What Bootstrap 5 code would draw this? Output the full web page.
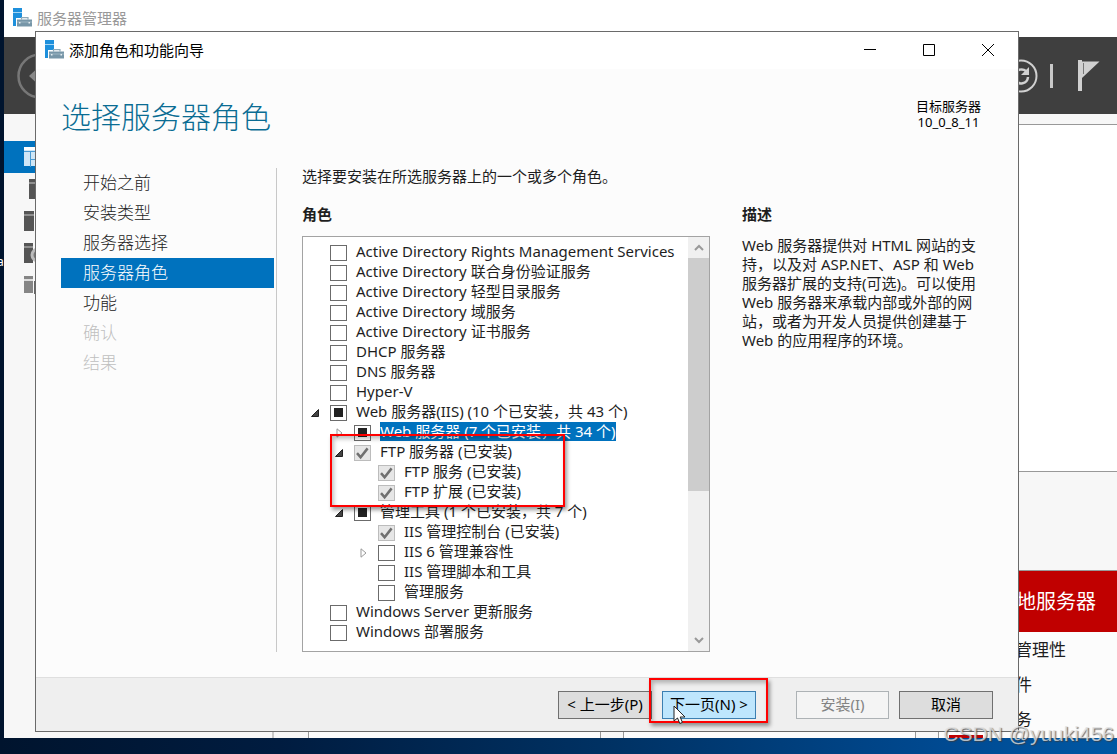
<!DOCTYPE html>
<html lang="zh-CN">
<head>
<meta charset="utf-8">
<meta name="viewport" content="width=device-width, initial-scale=1">
<title>添加角色和功能向导</title>
<link rel="stylesheet" href="https://cdn.jsdelivr.net/npm/bootstrap@5.3.0/dist/css/bootstrap.min.css">
<style>
  body { font-family: "Noto Sans", "Noto Sans CJK SC", sans-serif; font-size: 15px; line-height: 20px; color: #1e1e1e; }
  .desktop { height: 100vh; background: linear-gradient(90deg, #00142e, #001c40 25%, #003264 55%, #004a92 85%, #0058a4); }
  .desk-label { left: -3px; top: 252px; color: #fff; font-size: 12px; }

  /* Server manager window */
  .manager { inset: 0 0 16px 4px; background: #fff; }
  .manager-title { height: 37px; padding: 0 9px 2px; color: #999; }
  .manager-bar { height: 77px; background: #3f3f3f; padding: 0 15px 0 13px; gap: 12px; }
  .side { width: 270px; background: #f7f7f7; border-right: 2px solid #c8c8c8; padding-top: 27px; }
  .side-item { height: 32px; padding-left: 20px; color: #555; }
  .side-item.on { background: #0072be; }
  .board { background: #f7f7f7; padding: 10px 0 0 34px; }
  .welcome { height: 348px; background: #fff; border: 1px solid #999; border-right: 0; }
  .tiles { gap: 22px; padding-top: 98px; }
  .tile { flex: 0 0 293px; border: 1px solid #999; border-bottom: 0; background: #fcfcfc; }
  .tile-head { height: 61px; background: #c00000; color: #fff; font-size: 20px; padding-left: 57px; }
  .tile-line { height: 35px; padding-left: 59px; font-size: 17px; }
  .tile-flag { width: 34px; height: 4px; margin: -2px 0 0 10px; background: #c00000; }

  /* Wizard window */
  .wizard { inset: 31px 98px 22px 35px; background: #fcfcfc; border: 1px solid #6a6a6a; }
  .wizard-title { height: 37px; padding: 0 1px 2px 9px; background: #fff; color: #000; }
  .win-btn { width: 59px; height: 35px; }
  .wizard-head { height: 99px; padding: 28px 37px 0 25px; }
  .wizard-head h1 { font-size: 30px; line-height: 40px; font-weight: 300; color: #0a6c93; }
  .target { font-size: 13px; line-height: 16px; color: #000; padding-top: 1px; }
  .wizard-main { padding: 0 25px 25px; }
  .steps { width: 216px; padding-right: 2px; border-right: 1px solid #c8c8c8; }
  .steps .nav-link { height: 30px; padding: 0 22px; font-size: 17px; line-height: 30px; font-weight: 300; color: #222; border-radius: 0; }
  .steps .nav-link.active { background: #0072be; color: #fff; }
  .steps .nav-link.disabled { color: #bfbfbf; }
  .roles { padding-left: 25px; }
  .caption { line-height: 16px; }
  .group-title { font-size: 15px; line-height: 18px; font-weight: 700; margin: 21px 0 13px; }
  .about { width: 251px; margin-left: 32px; padding: 16px 6px 0 0; }
  .about p { line-height: 19px; }

  .tree-box { background: #fff; border: 1px solid #a3a3a3; }
  .tree { padding-top: 4px; overflow: hidden; }
  .tree-row { height: 20px; padding-left: 8px; white-space: nowrap; }
  .lvl-1 { padding-left: 32px; }
  .lvl-2 { padding-left: 56px; }
  .twist { width: 19px; padding-top: 3px; flex: none; }
  .tree-row .form-check-input { width: 17px; height: 16px; flex: none; margin: 3px 9px 0 0; border: 1px solid #6b6b6b; border-radius: 0; background-color: #fff; }
  .form-check-input.partial { background: linear-gradient(#222, #222) center / 9px 9px no-repeat; }
  .tree-row .form-check-input:disabled { opacity: 1; border-color: #bcbcbc; background-color: #e6e6e6;
    background-image: url("data:image/svg+xml,%3Csvg xmlns='http://www.w3.org/2000/svg' viewBox='0 0 15 14'%3E%3Cpath d='M2 7.2 5.6 11.2 12.6 2.4' fill='none' stroke='%23707070' stroke-width='2.5'/%3E%3C/svg%3E"); }
  .tree-row .form-check-input:disabled ~ label { opacity: 1; }
  .picked { background: #0072be; color: #fff; line-height: 19px; }
  .bar { width: 21px; background: #f0f0f0; }
  .bar-end { height: 21px; }
  .bar-thumb { flex: 233 0 0; background: #cdcdcd; }
  .bar-rest { flex: 139 0 0; }

  .mark-box { border: 2px solid #f00; box-shadow: 2px 3px 4px rgba(0,0,0,.4), inset 2px 3px 4px rgba(0,0,0,.25); pointer-events: none; z-index: 2; }
  .mark-roles { left: 27px; top: 197px; width: 235px; height: 73px; }
  .mark-next { left: -13px; top: -13px; width: 119px; height: 45px; }

  .wizard-foot { height: 54px; padding: 13px 25px 0; gap: 10px; background: #efefef; border-top: 1px solid #dfdfdf; }
  .next-slot { margin-right: 30px; }
  .cmd { width: 94px; height: 28px; padding: 0 0 2px; border: 1px solid #707070; border-radius: 0; background: #dddddd; color: #000; font-size: 15px; line-height: 24px; white-space: nowrap; }
  .cmd.next { background: #bee6fd; border-color: #3c7fb1; }
  .cmd:disabled { width: 93px; background: #f4f4f4; border-color: #adb2b5; color: #838383; opacity: 1; }
  .pointer { left: 11px; top: 14px; z-index: 3; }
  .sign { right: 3px; bottom: 7px; font: 21px/26px "Liberation Sans", sans-serif; color: rgba(225,225,225,.8); text-shadow: 1px 1px 1px rgba(60,60,60,.75); }
</style>
</head>
<body>
<svg width="0" height="0" class="position-absolute">
  <symbol id="server" viewBox="0 0 20 20">
    <path d="M0 0h9v18H0z" fill="#1e90dc"/>
    <path d="M0 4.500h9" stroke="#a5d6f5" stroke-width="1"/>
    <path d="M3 10h17v9H3z" fill="#fff"/>
    <path d="M8.500 11.500V9.700h6.500v1.800" fill="none" stroke="#8fa9b8" stroke-width="1.200"/>
    <path d="M4 11.500h15v7H4z" fill="#7796a8"/>
    <path d="M4 14h15" stroke="#9db5c2"/><path d="M6 14h1.500v1.500H6zM15.500 14H17v1.500h-1.500z" fill="#e6eef2"/>
  </symbol>
  <symbol id="open" viewBox="0 0 8 8"><path d="M7.500.5v7h-7z" fill="#444" stroke="#222"/></symbol>
  <symbol id="shut" viewBox="0 0 8 10"><path d="M2 .8v8.400L7 5z" fill="#fff" stroke="#999"/></symbol>
</svg>

<div class="desktop position-relative overflow-hidden">
  <span class="desk-label position-absolute">a</span>

  <section class="manager position-absolute d-flex flex-column overflow-hidden" aria-label="服务器管理器">
    <header class="manager-title d-flex align-items-center gap-1 flex-shrink-0">
      <svg width="20" height="20"><use href="#server"/></svg><span>服务器管理器</span>
    </header>
    <div class="manager-bar d-flex align-items-center flex-shrink-0">
      <svg width="46" height="46" viewBox="0 0 46 46" fill="none"><circle cx="23" cy="23" r="21.500" stroke="#777" stroke-width="2.500"/><path d="M12 23 24 12v22z" fill="#888"/></svg>
      <svg class="ms-auto" width="34" height="34" viewBox="0 0 34 34" fill="none" stroke="#d0d0d0"><circle cx="17" cy="17" r="15.500" stroke-width="2"/><path d="M11 15a7 7 0 0 1 11-3M24 18a7 7 0 0 1-13 3" stroke-width="2.500"/><path d="M25 8v8h-8z" fill="#d0d0d0" stroke="none"/></svg>
      <svg width="4" height="24"><path d="M0 0h3v24H0z" fill="#c8c8c8"/></svg>
      <svg class="ms-2" width="28" height="32" viewBox="0 0 28 32"><path d="M4 0h4v31H4z" fill="#d0d0d0"/><path d="M8 1.500h17.500L8 18z" fill="#d0d0d0"/><path d="M9.500 3v11" stroke="#777"/></svg>
    </div>
    <div class="d-flex flex-grow-1">
      <nav class="side flex-shrink-0">
        <div class="side-item on d-flex align-items-center"><svg width="20" height="20"><path d="M0 1h20v18H0z" fill="#cfe6f6"/><path d="M0 0h20v3H0z" fill="#fff"/><path d="M0 4.500h20M6.500 4v16M6 12.500h14" stroke="#4a9bd3"/></svg></div>
        <div class="side-item d-flex align-items-center"><svg class="ms-1" width="14" height="20"><path d="M1 0h13v20H1z" fill="#555"/><path d="M1 4h13" stroke="#ccc"/></svg></div>
        <div class="side-item d-flex align-items-center"><svg width="20" height="20"><path d="M0 0h10v20H0z" fill="#555"/><path d="M0 4h10" stroke="#ccc"/><path d="M12 0h8v20h-8z" fill="#555"/></svg></div>
        <div class="side-item d-flex align-items-center"><svg width="20" height="20"><path d="M0 0h9v20H0z" fill="#555"/><path d="M0 4h9" stroke="#ccc"/><circle cx="14" cy="12" r="6" fill="#777" stroke="#bbb" stroke-width="3"/></svg></div>
        <div class="side-item d-flex align-items-center"><svg width="20" height="18"><path d="M0 0h9v17H0z" fill="#858585"/><path d="M0 4h9" stroke="#ddd" stroke-width="2"/><path d="M10 5h6v13h-6z" fill="#666"/></svg></div>
      </nav>
      <main class="board flex-grow-1 overflow-hidden">
        <div class="welcome"></div>
        <div class="tiles d-flex h-100">
          <div class="tile"></div>
          <div class="tile"></div>
          <div class="tile">
            <div class="tile-head d-flex align-items-center">本地服务器</div>
            <div class="tile-line d-flex align-items-center">可管理性</div>
            <div class="tile-line d-flex align-items-center">事件</div>
            <div class="tile-line d-flex align-items-center">服务</div>
            <div class="tile-flag"></div>
          </div>
        </div>
      </main>
    </div>
  </section>

  <section class="wizard position-absolute d-flex flex-column" role="dialog" aria-labelledby="wizTitle">
    <header class="wizard-title d-flex align-items-center flex-shrink-0">
      <svg width="20" height="20"><use href="#server"/></svg><span id="wizTitle" class="ms-1">添加角色和功能向导</span>
      <div class="ms-auto d-flex">
        <button class="win-btn btn p-0 border-0 rounded-0" aria-label="最小化"><svg width="12" height="12" class="d-block mx-auto" stroke="#000"><path d="M0 5.500h12"/></svg></button>
        <button class="win-btn btn p-0 border-0 rounded-0" aria-label="最大化"><svg width="12" height="12" class="d-block mx-auto" stroke="#000" fill="none"><path d="M.5.500h11v11H.5z"/></svg></button>
        <button class="win-btn btn p-0 border-0 rounded-0" aria-label="关闭"><svg width="12" height="12" class="d-block mx-auto" stroke="#000"><path d="M0 0l12 12M12 0 0 12"/></svg></button>
      </div>
    </header>

    <div class="wizard-head d-flex justify-content-between align-items-start flex-shrink-0">
      <h1 class="m-0">选择服务器角色</h1>
      <div class="target text-center">目标服务器<br>10_0_8_11</div>
    </div>

    <div class="wizard-main d-flex flex-grow-1">
      <nav class="steps nav flex-column flex-nowrap flex-shrink-0">
        <a class="nav-link" href="#">开始之前</a>
        <a class="nav-link" href="#">安装类型</a>
        <a class="nav-link" href="#">服务器选择</a>
        <a class="nav-link active" href="#" aria-current="step">服务器角色</a>
        <a class="nav-link" href="#">功能</a>
        <a class="nav-link disabled" href="#" aria-disabled="true">确认</a>
        <a class="nav-link disabled" href="#" aria-disabled="true">结果</a>
      </nav>

      <div class="roles d-flex flex-column flex-grow-1">
        <div class="caption">选择要安装在所选服务器上的一个或多个角色。</div>
        <h2 class="group-title">角色</h2>
        <div class="tree-box position-relative d-flex flex-grow-1">
          <div class="tree flex-grow-1">
            <div class="tree-row d-flex align-items-center"><span class="twist"></span><input class="form-check-input" type="checkbox" id="r1"><label for="r1">Active Directory Rights Management Services</label></div>
            <div class="tree-row d-flex align-items-center"><span class="twist"></span><input class="form-check-input" type="checkbox" id="r2"><label for="r2">Active Directory 联合身份验证服务</label></div>
            <div class="tree-row d-flex align-items-center"><span class="twist"></span><input class="form-check-input" type="checkbox" id="r3"><label for="r3">Active Directory 轻型目录服务</label></div>
            <div class="tree-row d-flex align-items-center"><span class="twist"></span><input class="form-check-input" type="checkbox" id="r4"><label for="r4">Active Directory 域服务</label></div>
            <div class="tree-row d-flex align-items-center"><span class="twist"></span><input class="form-check-input" type="checkbox" id="r5"><label for="r5">Active Directory 证书服务</label></div>
            <div class="tree-row d-flex align-items-center"><span class="twist"></span><input class="form-check-input" type="checkbox" id="r6"><label for="r6">DHCP 服务器</label></div>
            <div class="tree-row d-flex align-items-center"><span class="twist"></span><input class="form-check-input" type="checkbox" id="r7"><label for="r7">DNS 服务器</label></div>
            <div class="tree-row d-flex align-items-center"><span class="twist"></span><input class="form-check-input" type="checkbox" id="r8"><label for="r8">Hyper-V</label></div>
            <div class="tree-row d-flex align-items-center"><span class="twist d-flex"><svg width="8" height="8"><use href="#open"/></svg></span><input class="form-check-input partial" type="checkbox" id="r9"><label for="r9">Web 服务器(IIS) (10 个已安装，共 43 个)</label></div>
            <div class="tree-row lvl-1 d-flex align-items-center"><span class="twist d-flex"><svg width="8" height="10"><use href="#shut"/></svg></span><input class="form-check-input partial" type="checkbox" id="r10"><label class="picked" for="r10">Web 服务器 (7 个已安装，共 34 个)</label></div>
            <div class="tree-row lvl-1 d-flex align-items-center"><span class="twist d-flex"><svg width="8" height="8"><use href="#open"/></svg></span><input class="form-check-input" type="checkbox" id="r11" checked disabled><label for="r11">FTP 服务器 (已安装)</label></div>
            <div class="tree-row lvl-2 d-flex align-items-center"><span class="twist"></span><input class="form-check-input" type="checkbox" id="r12" checked disabled><label for="r12">FTP 服务 (已安装)</label></div>
            <div class="tree-row lvl-2 d-flex align-items-center"><span class="twist"></span><input class="form-check-input" type="checkbox" id="r13" checked disabled><label for="r13">FTP 扩展 (已安装)</label></div>
            <div class="tree-row lvl-1 d-flex align-items-center"><span class="twist d-flex"><svg width="8" height="8"><use href="#open"/></svg></span><input class="form-check-input partial" type="checkbox" id="r14"><label for="r14">管理工具 (1 个已安装，共 7 个)</label></div>
            <div class="tree-row lvl-2 d-flex align-items-center"><span class="twist"></span><input class="form-check-input" type="checkbox" id="r15" checked disabled><label for="r15">IIS 管理控制台 (已安装)</label></div>
            <div class="tree-row lvl-2 d-flex align-items-center"><span class="twist d-flex"><svg width="8" height="10"><use href="#shut"/></svg></span><input class="form-check-input" type="checkbox" id="r16"><label for="r16">IIS 6 管理兼容性</label></div>
            <div class="tree-row lvl-2 d-flex align-items-center"><span class="twist"></span><input class="form-check-input" type="checkbox" id="r17"><label for="r17">IIS 管理脚本和工具</label></div>
            <div class="tree-row lvl-2 d-flex align-items-center"><span class="twist"></span><input class="form-check-input" type="checkbox" id="r18"><label for="r18">管理服务</label></div>
            <div class="tree-row d-flex align-items-center"><span class="twist"></span><input class="form-check-input" type="checkbox" id="r19"><label for="r19">Windows Server 更新服务</label></div>
            <div class="tree-row d-flex align-items-center"><span class="twist"></span><input class="form-check-input" type="checkbox" id="r20"><label for="r20">Windows 部署服务</label></div>
          </div>
          <div class="bar d-flex flex-column flex-shrink-0">
            <div class="bar-end d-flex align-items-center justify-content-center"><svg width="10" height="7" fill="none" stroke="#999" stroke-width="2"><path d="M1 6l4-4 4 4"/></svg></div>
            <div class="bar-thumb"></div>
            <div class="bar-rest"></div>
            <div class="bar-end d-flex align-items-center justify-content-center"><svg width="10" height="7" fill="none" stroke="#999" stroke-width="2"><path d="M1 1l4 4 4-4"/></svg></div>
          </div>
          <div class="mark-box mark-roles position-absolute"></div>
        </div>
      </div>

      <aside class="about flex-shrink-0">
        <h2 class="group-title">描述</h2>
        <p class="m-0">Web 服务器提供对 HTML 网站的支持，以及对 ASP.NET、ASP 和 Web 服务器扩展的支持(可选)。可以使用 Web 服务器来承载内部或外部的网站，或者为开发人员提供创建基于 Web 的应用程序的环境。</p>
      </aside>
    </div>

    <footer class="wizard-foot d-flex justify-content-end align-items-start flex-shrink-0">
      <button class="cmd btn">&lt; 上一步(P)</button>
      <div class="next-slot position-relative d-flex">
        <button class="cmd next btn">下一页(N) &gt;</button>
        <div class="mark-box mark-next position-absolute"></div>
        <svg class="pointer position-absolute" width="14" height="20" viewBox="0 0 14 20"><path d="M1 1v15l3.500-3 2.300 5.500 2.600-1.100L7.200 12H12z" fill="#fff" stroke="#222" stroke-width="1"/></svg>
      </div>
      <button class="cmd btn" disabled>安装(I)</button>
      <button class="cmd btn">取消</button>
    </footer>
  </section>

  <div class="sign position-absolute">CSDN @yuuki456</div>
</div>
<script src="https://cdn.jsdelivr.net/npm/bootstrap@5.3.0/dist/js/bootstrap.bundle.min.js"></script>
</body>
</html>
